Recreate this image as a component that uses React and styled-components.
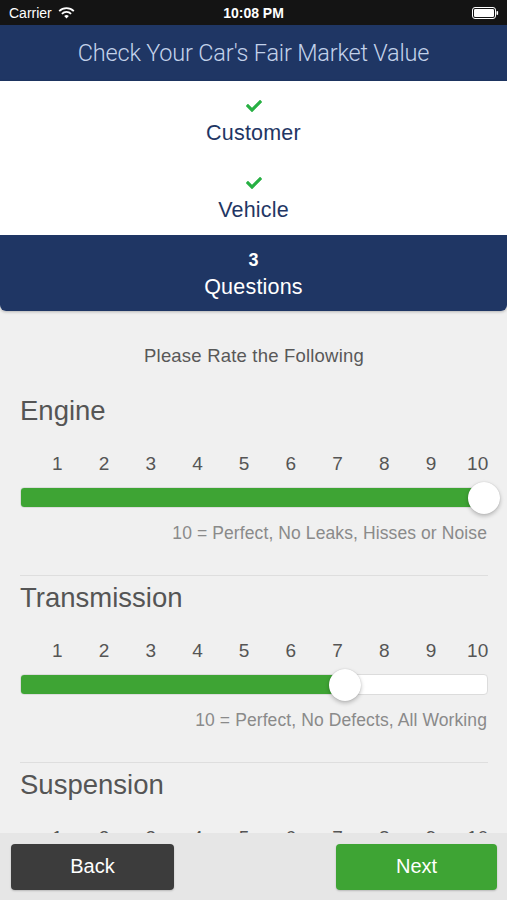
import React from "react";
import styled, { createGlobalStyle } from "styled-components";
import { FaCheck } from "react-icons/fa";

const GlobalStyle = createGlobalStyle`
  html, body {
    margin: 0;
    padding: 0;
    background: #f0f0f0;
  }
  body {
    font-family: "Liberation Sans", Arial, sans-serif;
    -webkit-font-smoothing: antialiased;
  }
  * {
    box-sizing: border-box;
  }
`;

const Screen = styled.div`
  width: 507px;
  height: 900px;
  display: flex;
  flex-direction: column;
  overflow: hidden;
  background: #f0f0f0;
`;

const StatusBar = styled.div`
  height: 25px;
  background: #141414;
  color: #fff;
  display: flex;
  align-items: center;
  justify-content: space-between;
  padding: 0 8px 0 9px;
  font-size: 14px;
  position: relative;
`;

const Carrier = styled.div`
  display: flex;
  align-items: center;
  gap: 6px;
`;

const Clock = styled.div`
  position: absolute;
  left: 0;
  right: 0;
  text-align: center;
  font-weight: bold;
  font-size: 14px;
  pointer-events: none;
`;

const NavBar = styled.div`
  height: 56px;
  background: #1f3664;
  color: #c3d2ea;
  display: flex;
  align-items: center;
  justify-content: center;
  font-family: Roboto, "Liberation Sans", sans-serif;
  font-weight: 300;
  font-size: 23.5px;
  letter-spacing: -0.2px;
`;

const Stepper = styled.div`
  background: #fff;
  border-radius: 0 0 6px 6px;
  box-shadow: 0 1px 3px rgba(0, 0, 0, 0.25);
  overflow: hidden;
  position: relative;
  z-index: 1;
`;

const Step = styled.div`
  height: ${(p) => (p.$active ? 76 : 77)}px;
  padding-top: 15px;
  display: flex;
  flex-direction: column;
  align-items: center;
  background: ${(p) => (p.$active ? "#1f3664" : "#fff")};
  color: ${(p) => (p.$active ? "#fff" : "#1f3664")};
`;

const StepMark = styled.div`
  height: 20px;
  display: flex;
  align-items: center;
  justify-content: center;
  color: #27b043;
  font-size: 18px;
  font-weight: bold;
  ${(p) => p.$active && "color: #fff;"}
`;

const StepLabel = styled.div`
  margin-top: 5px;
  font-size: 21.5px;
  line-height: 24px;
  letter-spacing: 0.2px;
`;

const Content = styled.div`
  flex: 1;
  overflow: hidden;
  padding: 33px 19px 0 20px;
`;

const Subtitle = styled.div`
  text-align: center;
  font-size: 18.5px;
  line-height: 24px;
  letter-spacing: 0.2px;
  color: #585858;
  margin-bottom: 27px;
`;

const Section = styled.div`
  border-bottom: 1px solid #dedede;
  padding-bottom: 32px;
  margin-bottom: 6px;
`;

const SectionTitle = styled.div`
  font-size: 27.5px;
  line-height: 32px;
  color: #555;
`;

const Numbers = styled.div`
  display: grid;
  grid-template-columns: repeat(10, 1fr);
  margin: 26px -13px 12px 14px;
  font-size: 19px;
  line-height: 22px;
  color: #555;
  text-align: center;
`;

const Track = styled.div`
  position: relative;
  height: 21px;
  background: #fff;
  border: 1px solid #dcdcdc;
  border-radius: 4px;
`;

const Fill = styled.div`
  height: 100%;
  background: #3ea434;
  border-radius: 3px 0 0 3px;
`;

const Thumb = styled.div`
  position: absolute;
  top: 50%;
  width: 32px;
  height: 32px;
  margin: -16px 0 0 -16px;
  border-radius: 50%;
  background: #fff;
  box-shadow: 0 2px 4px rgba(0, 0, 0, 0.25), 0 0 1px rgba(0, 0, 0, 0.2);
`;

const Caption = styled.div`
  margin-top: 15px;
  text-align: right;
  padding-right: 1px;
  font-size: 17.5px;
  line-height: 20px;
  letter-spacing: 0.1px;
  color: #8a8a8a;
`;

const Footer = styled.div`
  height: 67px;
  background: #e6e6e6;
  display: flex;
  justify-content: space-between;
  align-items: center;
  padding: 0 10px 0 11px;
`;

const Button = styled.button`
  width: ${(p) => p.$width}px;
  height: 46px;
  border: none;
  border-radius: 4px;
  background: ${(p) => p.$bg};
  color: #fff;
  font-family: "Liberation Sans", Arial, sans-serif;
  font-size: 20px;
  box-shadow: 0 1px 2px rgba(0, 0, 0, 0.2);
`;

const Wifi = () => (
  <svg width="17" height="12" viewBox="0 0 17 12">
    <path d="M8.5 11.5 L6.2 9.1 A3.3 3.3 0 0 1 10.8 9.1 Z" fill="#fff" />
    <path d="M3.9 6.8 A6.5 6.5 0 0 1 13.1 6.8" stroke="#fff" strokeWidth="1.8" fill="none" />
    <path d="M1.2 4.1 A10.3 10.3 0 0 1 15.8 4.1" stroke="#fff" strokeWidth="1.8" fill="none" />
  </svg>
);

const Battery = () => (
  <svg width="27" height="12" viewBox="0 0 27 12">
    <rect x="0.5" y="0.5" width="23" height="11" rx="2.5" stroke="#fff" fill="none" />
    <rect x="2" y="2" width="20" height="8" rx="1.2" fill="#fff" />
    <rect x="24.5" y="4" width="1.6" height="4" rx="0.8" fill="#fff" />
  </svg>
);

const ratings = [
  { title: "Engine", value: 10, caption: "10 = Perfect, No Leaks, Hisses or Noise" },
  { title: "Transmission", value: 7, caption: "10 = Perfect, No Defects, All Working" },
  { title: "Suspension", value: 8, caption: "10 = Perfect, No Noise, Rides Smooth" },
];

const Rating = ({ title, value, caption }) => {
  const pos = (value / 10) * 463;
  return (
    <Section>
      <SectionTitle>{title}</SectionTitle>
      <Numbers>
        {[1, 2, 3, 4, 5, 6, 7, 8, 9, 10].map((n) => (
          <span key={n}>{n}</span>
        ))}
      </Numbers>
      <Track>
        <Fill style={{ width: Math.min(pos, 466) }} />
        <Thumb style={{ left: pos }} />
      </Track>
      <Caption>{caption}</Caption>
    </Section>
  );
};

export default function App() {
  return (
    <Screen>
      <GlobalStyle />
      <StatusBar>
        <Carrier>
          Carrier <Wifi />
        </Carrier>
        <Clock>10:08 PM</Clock>
        <Battery />
      </StatusBar>
      <NavBar>Check Your Car's Fair Market Value</NavBar>
      <Stepper>
        <Step>
          <StepMark>
            <FaCheck size={16} />
          </StepMark>
          <StepLabel>Customer</StepLabel>
        </Step>
        <Step>
          <StepMark>
            <FaCheck size={16} />
          </StepMark>
          <StepLabel>Vehicle</StepLabel>
        </Step>
        <Step $active>
          <StepMark $active>3</StepMark>
          <StepLabel>Questions</StepLabel>
        </Step>
      </Stepper>
      <Content>
        <Subtitle>Please Rate the Following</Subtitle>
        {ratings.map((r) => (
          <Rating key={r.title} {...r} />
        ))}
      </Content>
      <Footer>
        <Button $bg="#3c3c3c" $width={163}>
          Back
        </Button>
        <Button $bg="#3ea434" $width={161}>
          Next
        </Button>
      </Footer>
    </Screen>
  );
}
